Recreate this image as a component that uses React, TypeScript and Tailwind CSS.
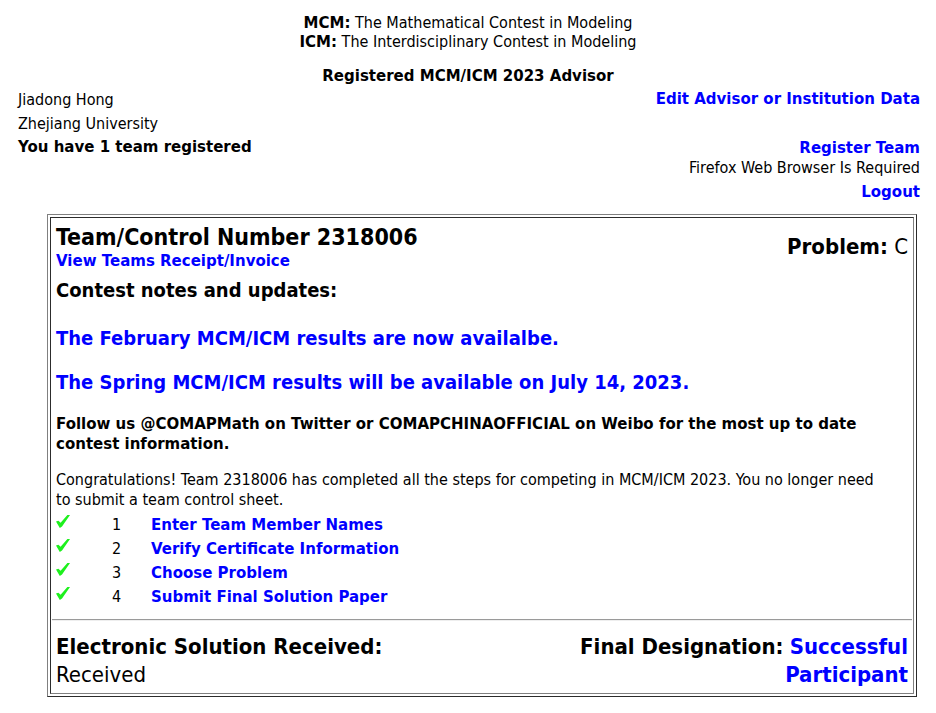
import type { ReactNode } from "react";

const steps = [
  "Enter Team Member Names",
  "Verify Certificate Information",
  "Choose Problem",
  "Submit Final Solution Paper",
];

const strong = "font-['DejaVu_Sans',sans-serif] text-[15px] font-bold";

function Link({ children }: { children: ReactNode }) {
  return (
    <a href="#" className="font-bold text-[#0000ff]">
      {children}
    </a>
  );
}

function Check() {
  return (
    <svg viewBox="0 0 14 13" className="h-[13px] w-[14px]" role="img" aria-label="Done">
      <path d="M0 6.6 2.4 5.8 4.6 7.8 11.4 0H14L6 11.4 3.8 13Z" fill="#1df01d" />
    </svg>
  );
}

export default function App() {
  return (
    <main className="bg-white px-4 pt-[13px] pb-4 font-['DejaVu_Sans_Condensed','DejaVu_Sans',sans-serif] text-base leading-[19px] text-black">
      <header className="text-center">
        <p className="h-[19px]"><b className={strong}>MCM:</b> The Mathematical Contest in Modeling</p>
        <p className="h-[19px]"><b className={strong}>ICM:</b> The Interdisciplinary Contest in Modeling</p>
        <h1 className={`mt-4 ${strong}`}>Registered MCM/ICM 2023 Advisor</h1>
      </header>

      <section className="mt-1 flex justify-between pl-0.5">
        <div className="space-y-[5px]">
          <p>Jiadong Hong</p>
          <p>Zhejiang University</p>
          <p className={strong}>You have 1 team registered</p>
        </div>
        <div className="text-right">
          <p className={strong}><Link>Edit Advisor or Institution Data</Link></p>
          <p className={`mt-[30px] ${strong}`}><Link>Register Team</Link></p>
          <p>Firefox Web Browser Is Required</p>
          <p className={`mt-1.5 ${strong}`}><Link>Logout</Link></p>
        </div>
      </section>

      <section className="mt-3 mr-[3px] ml-[31px] border border-t-[#808080] border-r-[#2c2c2c] border-b-[#2c2c2c] border-l-[#808080] p-0.5">
        <div className="border border-t-[#2c2c2c] border-r-[#808080] border-b-[#808080] border-l-[#2c2c2c] px-px pt-[5px] pb-1">
          <div className="px-1 leading-5">
            <div className="flex items-center justify-between">
              <div>
                <h2 className="text-[23px] leading-7 font-bold">Team/Control Number 2318006</h2>
                <p className={strong}><Link>View Teams Receipt/Invoice</Link></p>
              </div>
              <p className="text-[22px] leading-7"><b>Problem:</b> C</p>
            </div>
            <h3 className="mt-[7px] text-xl leading-6 font-bold">Contest notes and updates:</h3>
            <p className="mt-6 text-xl leading-6"><Link>The February MCM/ICM results are now availalbe.</Link></p>
            <p className="mt-5 text-xl leading-6"><Link>The Spring MCM/ICM results will be available on July 14, 2023.</Link></p>
            <p className={`mt-5 ${strong}`}>
              Follow us @COMAPMath on Twitter or COMAPCHINAOFFICIAL on Weibo for the most up to date contest information.
            </p>
            <p className="mt-4 pr-5">
              Congratulations! Team 2318006 has completed all the steps for competing in MCM/ICM 2023. You no longer need to submit a team control sheet.
            </p>
            <ol className="mt-[5px] space-y-1">
              {steps.map((step, i) => (
                <li key={step} className="grid grid-cols-[56px_39px_1fr] leading-5">
                  <Check />
                  <span>{i + 1}</span>
                  <span className={strong}><Link>{step}</Link></span>
                </li>
              ))}
            </ol>
          </div>
          <hr className="mt-3 h-0.5 border-t border-b border-t-[#9a9a9a] border-b-[#eeeeee]" />
          <div className="mt-3 flex justify-between px-1 text-[22px] leading-7">
            <div>
              <p className="font-bold">Electronic Solution Received:</p>
              <p>Received</p>
            </div>
            <p className="w-2/5 text-right"><b>Final Designation:</b> <Link>Successful Participant</Link></p>
          </div>
        </div>
      </section>
    </main>
  );
}
